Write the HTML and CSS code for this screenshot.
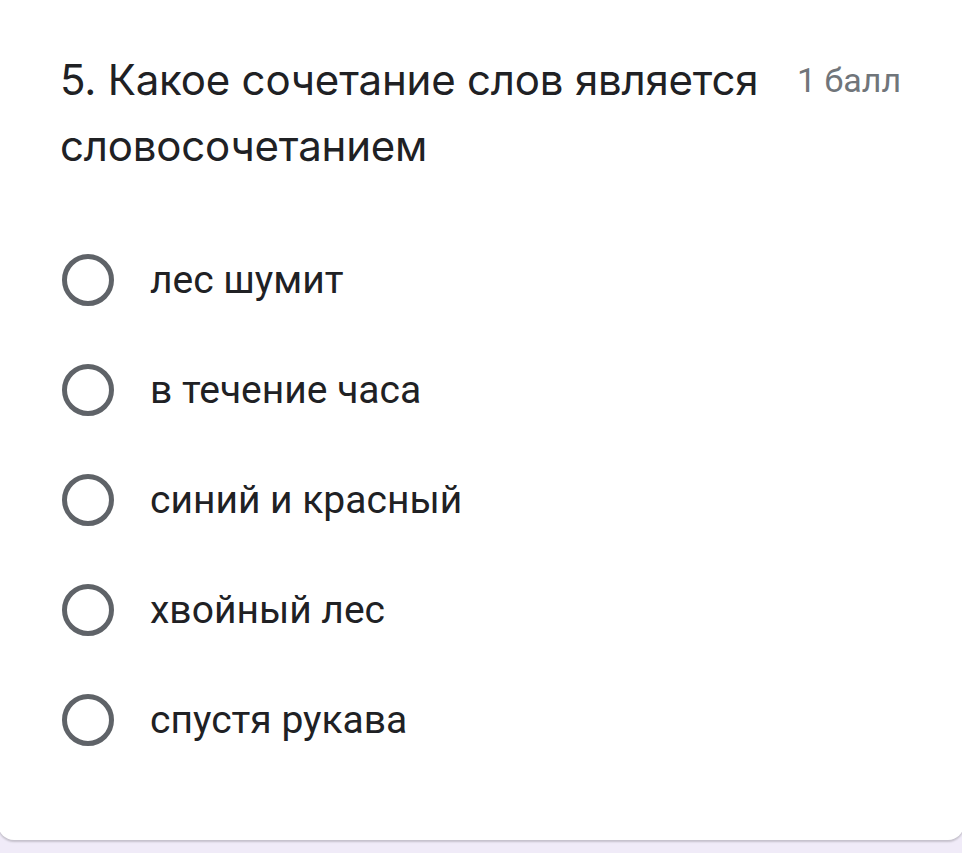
FILE: index.html
```html
<!DOCTYPE html>
<html lang="ru">
<head>
    <meta charset="UTF-8">
    <meta name="viewport" content="width=device-width, initial-scale=1.0">
    <title>Вопрос 5</title>
    <link rel="stylesheet" href="styles.css">
</head>
<body>
    <div class="question-card">
        <div class="question-header">
            <h2 class="question-title">5. Какое сочетание слов является словосочетанием</h2>
            <span class="question-points">1 балл</span>
        </div>

        <div class="options">
            <label class="option"><span class="radio"></span><span class="option-text">лес шумит</span></label>
            <label class="option"><span class="radio"></span><span class="option-text">в течение часа</span></label>
            <label class="option"><span class="radio"></span><span class="option-text">синий и красный</span></label>
            <label class="option"><span class="radio"></span><span class="option-text">хвойный лес</span></label>
            <label class="option"><span class="radio"></span><span class="option-text">спустя рукава</span></label>
        </div>
    </div>
</body>
</html>
```

FILE: styles.css
```css
body {
    margin: 0;
    padding: 0;
    background-color: #f0ebf8;
    font-family: Roboto, "Noto Sans", sans-serif;
    height: 853px;
    overflow: hidden;
}

.question-card {
    background-color: #fff;
    margin: 0 -2px;
    height: 840px;
    box-sizing: border-box;
    padding: 47px 40px 0 62px;
    border-radius: 0 0 16px 16px;
    box-shadow: 0 2px 2px rgba(0, 0, 0, 0.18);
}

.question-header {
    display: flex;
    align-items: flex-start;
    gap: 32px;
}

.question-title {
    margin: 0;
    width: 705px;
    font-family: Inter, "Open Sans", sans-serif;
    font-weight: 400;
    font-size: 42px;
    line-height: 66px;
    color: #202124;
    letter-spacing: -0.2px;
}

.question-points {
    font-size: 34px;
    line-height: 66px;
    color: #70757a;
    white-space: nowrap;
}

.options {
    margin-top: 46px;
}

.option {
    display: flex;
    align-items: center;
    height: 110px;
}

.radio {
    width: 42px;
    height: 42px;
    border: 5px solid #5f6368;
    border-radius: 50%;
    margin-left: 2px;
    flex-shrink: 0;
}

.option-text {
    margin-left: 36px;
    font-size: 39px;
    color: #202124;
}
```
